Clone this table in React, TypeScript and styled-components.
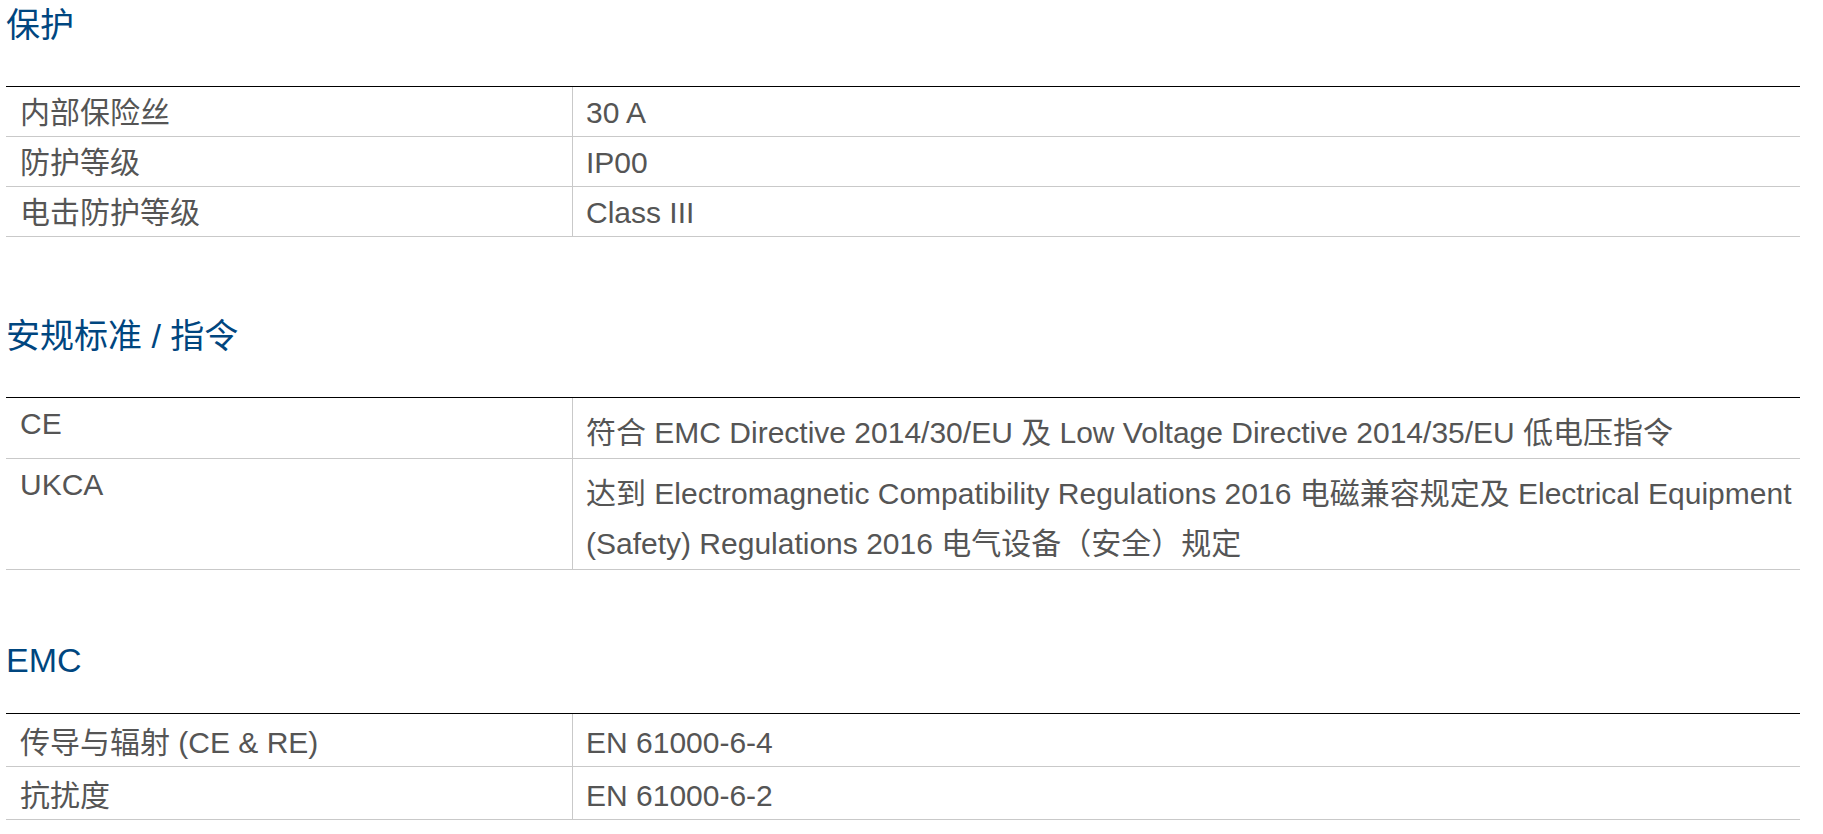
import React from "react";
import styled, { createGlobalStyle } from "styled-components";

const GlobalStyle = createGlobalStyle`
  html, body {
    margin: 0;
    padding: 0;
    background: #ffffff;
  }
  body {
    font-family: "Liberation Sans", Arial, "Noto Sans CJK SC", sans-serif;
  }
`;

const Page = styled.div`
  padding: 5px 23px 0 6px;
  font-family: "Liberation Sans", Arial, "Noto Sans CJK SC", sans-serif;
  color: #555555;
`;

const Section = styled.section<{ $top: number }>`
  margin-top: ${(p) => p.$top}px;
`;

const Title = styled.h2<{ $gap: number }>`
  margin: 0 0 ${(p) => p.$gap}px;
  font-size: 34px;
  line-height: 40px;
  font-weight: 400;
  color: #00467f;
`;

const Table = styled.div`
  border-top: 1px solid #000000;
`;

const Row = styled.div`
  display: grid;
  grid-template-columns: 566px 1fr;
  border-bottom: 1px solid #c9c9c9;
`;

const Label = styled.div<{ $pad: number }>`
  padding: ${(p) => p.$pad}px 14px 7px 14px;
  font-size: 30px;
  line-height: 32px;
`;

const Value = styled.div<{ $pad: number; $multi?: boolean }>`
  border-left: 1px solid #c9c9c9;
  padding: ${(p) => p.$pad}px 2px ${(p) => (p.$multi ? 0 : 7)}px 13px;
  font-size: 30px;
  line-height: ${(p) => (p.$multi ? 50 : 32)}px;
`;

type Item = { label: string; value: string; multi?: boolean };

type Block = { title: string; top: number; gap: number; pad: number; items: Item[] };

const blocks: Block[] = [
  {
    title: "保护",
    top: 0,
    gap: 41,
    pad: 10,
    items: [
      { label: "内部保险丝", value: "30 A" },
      { label: "防护等级", value: "IP00" },
      { label: "电击防护等级", value: "Class III" },
    ],
  },
  {
    title: "安规标准 / 指令",
    top: 79,
    gap: 41,
    pad: 10,
    items: [
      {
        label: "CE",
        value:
          "符合 EMC Directive 2014/30/EU 及 Low Voltage Directive 2014/35/EU 低电压指令",
        multi: true,
      },
      {
        label: "UKCA",
        value:
          "达到 Electromagnetic Compatibility Regulations 2016 电磁兼容规定及 Electrical Equipment (Safety) Regulations 2016 电气设备（安全）规定",
        multi: true,
      },
    ],
  },
  {
    title: "EMC",
    top: 70,
    gap: 33,
    pad: 13,
    items: [
      { label: "传导与辐射 (CE & RE)", value: "EN 61000-6-4" },
      { label: "抗扰度", value: "EN 61000-6-2" },
    ],
  },
];

export default function App() {
  return (
    <>
      <GlobalStyle />
      <Page>
        {blocks.map((b) => (
          <Section key={b.title} $top={b.top}>
            <Title $gap={b.gap}>{b.title}</Title>
            <Table>
              {b.items.map((it) => (
                <Row key={it.label}>
                  <Label $pad={b.pad}>{it.label}</Label>
                  <Value $pad={b.pad} $multi={it.multi}>
                    {it.value}
                  </Value>
                </Row>
              ))}
            </Table>
          </Section>
        ))}
      </Page>
    </>
  );
}
